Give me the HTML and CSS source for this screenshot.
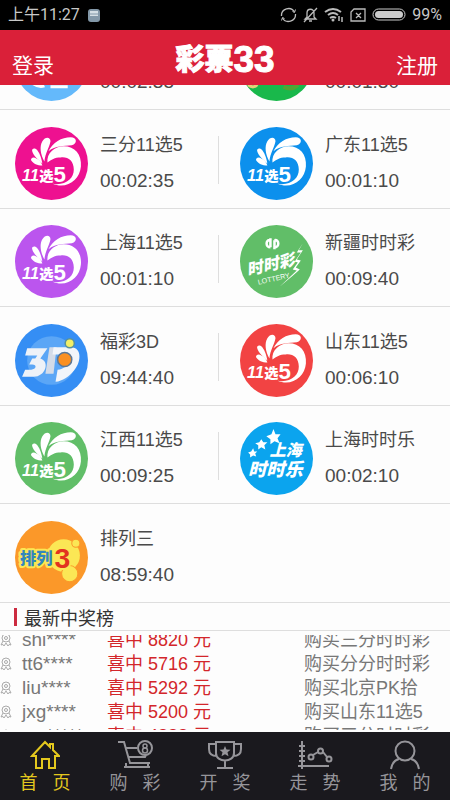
FILE: index.html
```html
<!DOCTYPE html>
<html lang="zh-CN">
<head>
  <meta charset="UTF-8">
  <meta name="viewport" content="width=device-width, initial-scale=1.0">
  <title>彩票33</title>
  <link rel="stylesheet" href="styles.css">
</head>
<body>
  <!-- shared symbols -->
  <svg class="defs" width="0" height="0" aria-hidden="true">
    <symbol id="eleven" viewBox="0 0 72 72">
      <circle cx="36" cy="36" r="36"/>
      <g fill="#fff">
        <path d="M27 36C22 32 18 28 17 24c-1-3 3-4 5-1 3 4 4 8 5 13z"/>
        <path d="M27 38C22 38 18 36 16 33c-1-2 2-4 5-2 3 1 5 4 6 7z"/>
        <path d="M29 34C25 27 24 19 27 14c3-5 8-4 8 0-1 6-5 11-6 20z"/>
        <path d="M33 24C37 15 46 10 55 10c6 0 7 6 1 8-8 1-16 0-23 6z"/>
        <path d="M32 35C31 26 39 19 48 19c11 0 18 8 17 20-1 13-14 23-28 17 13 2 21-5 21-14 0-9-6-13-13-12-6 0-9 2-13 5z"/>
      </g>
      <g class="icon-text" fill="#fff">
        <text x="7" y="53" font-size="16" font-style="italic">11</text>
        <text x="24" y="53" font-size="14">选</text>
        <text x="38" y="54" font-size="22">5</text>
      </g>
    </symbol>
    <symbol id="medal" viewBox="0 0 12 14">
      <g fill="none" stroke="#aaa">
        <circle cx="6" cy="5" r="4"/>
        <circle cx="6" cy="5" r="1.5"/>
        <path d="M3 8L1 12l2-.5L4 13l2-3 2 3 1-1.500 2 .5-2-4"/>
      </g>
    </symbol>
  </svg>

  <div class="app">
    <div class="status">
      <span>上午11:27</span>
      <svg width="12" height="13" viewBox="0 0 12 13"><rect width="12" height="13" rx="3" fill="#8398a8"/><path d="M2 2h8v5H2z" fill="#d5dfe5"/><path d="M2 5h8" stroke="#8398a8"/></svg>
      <div class="status-right">
        <svg width="17" height="16" viewBox="0 0 17 16" fill="none" stroke="#bbb" stroke-width="1.300"><path d="M1.500 9a7 7 0 0 1 13-4M15.500 7a7 7 0 0 1-13 4"/><path d="M15.500 2.500l-1 3-2-1M1.500 13.500l1-3 2 1" stroke-width="1"/></svg>
        <svg width="15" height="16" viewBox="0 0 15 16" fill="none" stroke="#bbb" stroke-width="1.300"><path d="M2 12h11l-2-2V6c0-5-7-5-7 0v4zM6 14h3M14 1L1 15"/></svg>
        <svg width="20" height="16" viewBox="0 0 20 16" fill="none" stroke="#bbb" stroke-width="2"><path d="M1 5q8-6 16 0M4 8q5-4 10 0M6 11q3-2 6 0"/><circle cx="9" cy="13" r="1.500" fill="#bbb" stroke="none"/><path d="M15 9v5M18 10v5" stroke-width="1.500"/></svg>
        <svg width="16" height="14" viewBox="0 0 16 14" fill="none" stroke="#bbb" stroke-width="1.300"><path d="M4 1h11v12H1V4zM6 5l5 5M11 5l-5 5"/></svg>
        <svg width="34" height="14" viewBox="0 0 34 14"><rect x="1" y="1" width="32" height="11" rx="5.500" fill="none" stroke="#ccc"/><rect x="3" y="3" width="28" height="7" rx="3.500" fill="#ccc"/></svg>
        <span>99%</span>
      </div>
    </div>

    <header class="header">
      <a href="#">登录</a>
      <h1>彩票<b>33</b></h1>
      <a href="#">注册</a>
    </header>

    <main class="games">
      <a class="game" href="#">
        <svg class="game-icon" viewBox="0 0 72 72"><circle cx="36" cy="36" r="36" fill="#64b9fb"/><path d="M18 55q6 4 11 2M35 58h17" fill="none" stroke="#fff" stroke-width="3"/></svg>
        <span class="game-info"><time>00:02:35</time></span>
      </a>
      <a class="game" href="#">
        <svg class="game-icon" viewBox="0 0 72 72"><circle cx="36" cy="36" r="36" fill="#19b84b"/><path d="M8 56q5 4 9 0" fill="none" stroke="#e5d27a" stroke-width="3"/><path d="M43 58q8 4 14-2" fill="none" stroke="#53a434" stroke-width="4"/></svg>
        <span class="game-info"><time>00:01:30</time></span>
      </a>
      <a class="game" href="#">
        <svg class="game-icon pink"><use href="#eleven"/></svg>
        <span class="game-info"><span>三分11选5</span><time>00:02:35</time></span>
      </a>
      <a class="game" href="#">
        <svg class="game-icon blue"><use href="#eleven"/></svg>
        <span class="game-info"><span>广东11选5</span><time>00:01:10</time></span>
      </a>
      <a class="game" href="#">
        <svg class="game-icon purple"><use href="#eleven"/></svg>
        <span class="game-info"><span>上海11选5</span><time>00:01:10</time></span>
      </a>
      <a class="game" href="#">
        <svg class="game-icon" viewBox="0 0 72 72">
          <circle cx="36" cy="36" r="36" fill="#61be68"/>
          <g fill="none" stroke="#fff" stroke-width="2.500"><path d="M30 15c-5-1-5 7 0 7M34 15c5-1 5 7 0 7M30 13v9M34 15v9"/></g>
          <g class="icon-text" fill="#fff" transform="rotate(-13 8 50)">
            <text x="8" y="50" font-size="16" font-style="italic">时时彩</text>
            <text class="latin" x="16" y="61" font-size="7">LOTTERY</text>
          </g>
          <path d="M62 18l-6 9 4 0-6 9 3 1-5 7 4 1-17 16 13-11 7-6-4-2 5-7-4-1 6-9-4 0z" fill="#fff"/>
        </svg>
        <span class="game-info"><span>新疆时时彩</span><time>00:09:40</time></span>
      </a>
      <a class="game" href="#">
        <svg class="game-icon" viewBox="0 0 72 72">
          <circle cx="36" cy="36" r="36" fill="#358ef4"/>
          <circle cx="36" cy="36" r="24" fill="#5ba6f6"/>
          <path d="M12 24h20l-7 10c10 3 5 19-8 18H7l3-7h6c5 0 6-5 1-5h-3l3-6h3l2-3h-12z" fill="#eef2f8"/>
          <path d="M34 23h7l-3 26h-8z" fill="#d3dbe8"/>
          <path d="M38 23h17c12 0 10 16 3 23-5 6-11 10-18 11l2-12c6 0 11-5 11-10 0-3-3-5-6-5H37z" fill="#f2f5fa"/>
          <circle cx="49" cy="35" r="7" fill="#fa8f21" stroke="#5b7796" stroke-width="1.500"/>
          <circle cx="54" cy="19" r="4.500" fill="#f3ef68" stroke="#57909c" stroke-width="1.500"/>
        </svg>
        <span class="game-info"><span>福彩3D</span><time>09:44:40</time></span>
      </a>
      <a class="game" href="#">
        <svg class="game-icon red"><use href="#eleven"/></svg>
        <span class="game-info"><span>山东11选5</span><time>00:06:10</time></span>
      </a>
      <a class="game" href="#">
        <svg class="game-icon green"><use href="#eleven"/></svg>
        <span class="game-info"><span>江西11选5</span><time>00:09:25</time></span>
      </a>
      <a class="game" href="#">
        <svg class="game-icon" viewBox="0 0 72 72">
          <circle cx="36" cy="36" r="36" fill="#0ba4ee"/>
          <g fill="#fff">
            <path d="M33 7l2 5 5 0-3 4 2 5-5-2-4 3 0-5-4-3 5-2z"/>
            <path d="M21 17l2 3 4 0-3 3 1 4-4-2-3 2 0-4-3-2 4-1z"/>
            <path d="M13 26l1 3 3 0-2 2 1 3-3-1-3 2 0-3-2-2 3-1z"/>
          </g>
          <g class="icon-text" fill="#fff">
            <text x="29" y="34" font-size="16" font-style="italic">上海</text>
            <text x="8" y="53" font-size="18" font-style="italic">时时乐</text>
          </g>
        </svg>
        <span class="game-info"><span>上海时时乐</span><time>00:02:10</time></span>
      </a>
      <a class="game" href="#">
        <svg class="game-icon" viewBox="0 0 72 72">
          <circle cx="36" cy="36" r="36" fill="#fb9829"/>
          <g fill="#fbe755"><circle cx="48" cy="34" r="16"/><circle cx="60" cy="22" r="4" stroke="#fb9829"/><circle cx="54" cy="52" r="8" stroke="#fb9829"/></g>
          <g class="icon-text" stroke="#fbe755" stroke-width="4" stroke-linejoin="round" paint-order="stroke">
            <text x="5" y="42" font-size="16" fill="#3286bd">排列</text>
            <text x="39" y="46" font-size="28" fill="#e2331f">3</text>
          </g>
        </svg>
        <span class="game-info"><span>排列三</span><time>08:59:40</time></span>
      </a>
    </main>

    <h2 class="title">最新中奖榜</h2>
    <div class="winners">
      <ul>
        <li><svg><use href="#medal"/></svg><span class="user">shi****</span><span class="prize">喜中 8820 元</span><span>购买三分时时彩</span></li>
        <li><svg><use href="#medal"/></svg><span class="user">tt6****</span><span class="prize">喜中 5716 元</span><span>购买分分时时彩</span></li>
        <li><svg><use href="#medal"/></svg><span class="user">liu****</span><span class="prize">喜中 5292 元</span><span>购买北京PK拾</span></li>
        <li><svg><use href="#medal"/></svg><span class="user">jxg****</span><span class="prize">喜中 5200 元</span><span>购买山东11选5</span></li>
        <li><svg><use href="#medal"/></svg><span class="user">wu*****</span><span class="prize">喜中 4888 元</span><span>购买三分时时彩</span></li>
      </ul>
    </div>

    <nav class="tabs">
      <a class="active" href="#">
        <svg viewBox="0 0 30 30"><path d="M2 16L15 2l5 5V4h3v6l6 6h-4v12h-6v-9h-7v9H6V16z"/></svg>
        <span>首 &nbsp; 页</span>
      </a>
      <a href="#">
        <svg class="wide" viewBox="0 0 36 30"><path d="M1 2h6l6 21h20M9 8h11M11 17h17l1-2M7 27h26M9 23v4M31 23v4"/><circle cx="28" cy="8" r="7"/><g stroke-width="1.500"><circle cx="28" cy="6" r="2"/><circle cx="28" cy="10.500" r="2.500"/></g></svg>
        <span>购 &nbsp; 彩</span>
      </a>
      <a href="#">
        <svg class="wide" viewBox="0 0 36 30"><path d="M9 2h18v11c0 10-18 10-18 0zM9 4H2v5c0 5 3 7 8 7M27 4h7v5c0 5-3 7-8 7M18 20v7M10 28h16"/><path class="solid" d="M18 6l1.500 3.500 4 .3-3 2.500 1 4-3.500-2.100-3.500 2.100 1-4-3-2.500 4-.3z"/></svg>
        <span>开 &nbsp; 奖</span>
      </a>
      <a href="#">
        <svg class="wide" viewBox="0 0 36 30"><path d="M5 1v28M1 26h31M2 6h6M2 11h6M2 16h6M2 21h6M16 15l5-3M26 12l4 5"/><circle cx="14" cy="17" r="2.500"/><circle cx="23.500" cy="11" r="2.500"/><circle cx="32" cy="19" r="2.500"/></svg>
        <span>走 &nbsp; 势</span>
      </a>
      <a href="#">
        <svg viewBox="0 0 30 30"><circle cx="15" cy="11" r="9.500"/><path d="M1 29c1-6 4-9 8-10M29 29c-1-6-4-9-8-10"/></svg>
        <span>我 &nbsp; 的</span>
      </a>
    </nav>
  </div>
</body>
</html>
```
FILE: styles.css
```css
* {
  box-sizing: border-box;
}

body {
  margin: 0;
  font-family: "Liberation Sans", "Noto Sans CJK SC", sans-serif;
  font-size: 18px;
  color: #4a4a4a;
  background: #fdfdfd;
}

a {
  color: inherit;
  text-decoration: none;
}

.defs {
  position: absolute;
}

.app {
  display: flex;
  flex-direction: column;
  height: 100vh;
}

/* status bar */
.status {
  display: flex;
  align-items: center;
  gap: 8px;
  height: 30px;
  padding: 0 8px;
  background: #000;
  color: #c8c8c8;
  font-family: Roboto, "Noto Sans CJK SC", sans-serif;
  font-size: 16px;
  line-height: 30px;
}

.status-right {
  display: flex;
  align-items: center;
  gap: 6px;
  margin-left: auto;
}

/* header */
.header {
  display: flex;
  justify-content: space-between;
  align-items: center;
  height: 55px;
  padding: 4px 12px 0;
  background: #da2039;
  color: #fff;
}

.header a {
  padding-top: 8px;
  font-size: 21px;
}

.header h1 {
  display: flex;
  align-items: center;
  margin: 0;
  font-size: 29px;
  font-weight: 900;
  line-height: 40px;
  -webkit-text-stroke: 1px #fff;
}

.header b {
  font-size: 37px;
}

/* game list, first row is scrolled under the header */
.games {
  flex: 1;
  min-height: 0;
  display: grid;
  grid-template-columns: 1fr 1fr;
  grid-template-rows: 25px repeat(5, 1fr);
}

.game {
  display: flex;
  align-items: flex-end;
  gap: 12px;
  min-height: 0;
  overflow: hidden;
  padding: 0 0 8px 15px;
  border-bottom: 1px solid #dedede;
}

.game:nth-child(odd):not(:first-child):not(:last-child) {
  background: linear-gradient(#dedede, #dedede) right 6px top 26px / 1px 48px no-repeat;
}

.game:last-child {
  grid-column: 1 / 3;
}

.game-icon {
  flex: none;
  width: 73px;
  height: 73px;
}

.pink { fill: #ee1190; }
.blue { fill: #0c90ed; }
.purple { fill: #bb55ee; }
.red { fill: #f24343; }
.green { fill: #61be68; }

.icon-text {
  font-family: "Liberation Sans", "Noto Sans CJK SC", sans-serif;
  font-weight: 900;
}

.latin {
  font-weight: 400;
}

.game-info {
  display: flex;
  flex-direction: column;
  gap: 10px;
  padding-bottom: 6px;
  line-height: 26px;
}

.game-info time {
  font-size: 19px;
}

/* winners */
.title {
  display: flex;
  align-items: center;
  gap: 7px;
  height: 28px;
  margin: 0;
  padding-left: 14px;
  border-bottom: 1px solid #dedede;
  font-size: 18px;
  font-weight: 400;
  color: #333;
}

.title::before {
  content: "";
  width: 3px;
  height: 18px;
  background: #cc2b40;
}

.winners {
  height: 95px;
  margin: 4px 0 2px;
  overflow: hidden;
  color: #777;
}

.winners ul {
  margin: -7px 0 0;
  padding: 0;
  list-style: none;
}

.winners li {
  display: grid;
  grid-template-columns: 12px 75px 1fr 136px;
  column-gap: 10px;
  align-items: center;
  height: 24px;
  padding-right: 10px;
  line-height: 24px;
  white-space: nowrap;
}

.winners svg {
  width: 12px;
  height: 14px;
}

.user {
  font-size: 19px;
}

.prize {
  color: #d3262b;
}

/* bottom tabs */
.tabs {
  display: flex;
  height: 68px;
  background: #1a191e;
  color: #96959a;
}

.tabs a {
  flex: 1;
  display: flex;
  flex-direction: column;
  align-items: center;
  padding-top: 8px;
}

.tabs svg {
  width: 30px;
  height: 30px;
  fill: none;
  stroke: currentColor;
  stroke-width: 2;
}

.tabs .wide {
  width: 36px;
}

.tabs .solid {
  fill: currentColor;
  stroke: none;
}

.tabs span {
  line-height: 26px;
}

.tabs .active {
  color: #e3c81e;
}
```
